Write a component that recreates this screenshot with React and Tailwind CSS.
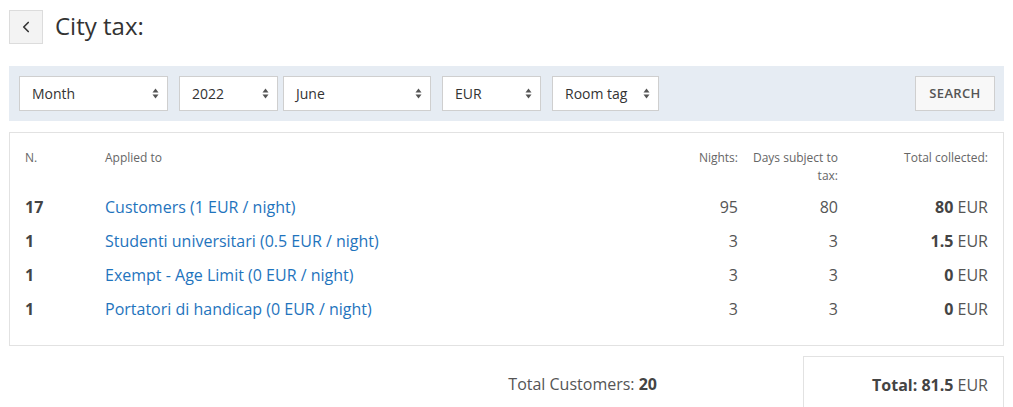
import { ChevronLeft } from "lucide-react";

const rows = [
    { n: 17, label: "Customers (1 EUR / night)", nights: 95, days: 80, total: "80" },
    { n: 1, label: "Studenti universitari (0.5 EUR / night)", nights: 3, days: 3, total: "1.5" },
    { n: 1, label: "Exempt - Age Limit (0 EUR / night)", nights: 3, days: 3, total: "0" },
    { n: 1, label: "Portatori di handicap (0 EUR / night)", nights: 3, days: 3, total: "0" },
];

const SortArrows = () => (
    <svg width="7" height="11" viewBox="0 0 7 11" className="shrink-0">
        <path d="M3.5 0.5 L6.5 4.5 L0.5 4.5 Z" fill="#555" />
        <path d="M3.5 10.5 L6.5 6.5 L0.5 6.5 Z" fill="#555" />
    </svg>
);

const FakeSelect = ({ label, className }) => (
    <div className={`h-[35px] bg-white border border-[#cfcfcf] flex items-center justify-between pl-3 pr-2 text-[14px] text-[#333] ${className}`}>
        <span>{label}</span>
        <SortArrows />
    </div>
);

const App = () => {
    return (
        <div className="w-[1013px] h-[407px] overflow-hidden bg-white text-[#333]" style={{ fontFamily: '"Open Sans", "Liberation Sans", sans-serif' }}>
            {/* heading */}
            <div className="flex items-center pl-[9px] pt-[10px]">
                <button className="w-[34px] h-[34px] bg-[#f3f3f3] border border-[#dcdcdc] flex items-center justify-center text-[#333]">
                    <ChevronLeft size={18} strokeWidth={2.2} />
                </button>
                <h1 className="ml-[12px] text-[24px] leading-none text-[#333] -mt-[2px]">City tax:</h1>
            </div>

            {/* filters */}
            <div className="mx-[9px] mt-[22px] h-[55px] bg-[#e6ecf3] flex items-center pl-[10px] pr-[9px]">
                <FakeSelect label="Month" className="w-[149px]" />
                <FakeSelect label="2022" className="w-[99px] ml-[11px]" />
                <FakeSelect label="June" className="w-[148px] ml-[5px]" />
                <FakeSelect label="EUR" className="w-[99px] ml-[11px]" />
                <FakeSelect label="Room tag" className="w-[107px] ml-[11px]" />
                <button className="ml-auto h-[35px] w-[80px] bg-[#f8f8f8] border border-[#cfcfcf] text-[13px] font-semibold text-[#555] tracking-wide">
                    SEARCH
                </button>
            </div>

            {/* table panel */}
            <div className="mx-[9px] mt-[11px] border border-[#e2e2e2] px-[15px] pt-[16px] pb-[19px]">
                <div className="grid grid-cols-[80px_1fr_100px_100px_150px] text-[12px] leading-[18px] text-[#666]">
                    <div>N.</div>
                    <div>Applied to</div>
                    <div className="text-right">Nights:</div>
                    <div className="text-right pl-[14px]">Days subject to tax:</div>
                    <div className="text-right">Total collected:</div>
                </div>
                <div className="mt-[5px]">
                    {rows.map((r, idx) => (
                        <div key={idx} className="grid grid-cols-[80px_1fr_100px_100px_150px] h-[34px] items-center text-[16px]">
                            <div className="font-bold text-[#444]">{r.n}</div>
                            <div className="text-[#1f74bd]">{r.label}</div>
                            <div className="text-right text-[#555]">{r.nights}</div>
                            <div className="text-right text-[#555]">{r.days}</div>
                            <div className="text-right text-[#555]">
                                <span className="font-bold text-[#444]">{r.total}</span> EUR
                            </div>
                        </div>
                    ))}
                </div>
            </div>

            {/* totals */}
            <div className="flex items-start justify-end mx-[9px] mt-[10px]">
                <div className="mt-[16px] mr-[146px] text-[16px] text-[#555]">
                    Total Customers: <span className="font-bold text-[#444]">20</span>
                </div>
                <div className="w-[201px] h-[60px] border border-[#e2e2e2] flex justify-end pr-[15px] pt-[16px] text-[16px] text-[#555]">
                    <span><span className="font-bold text-[#444]">Total: 81.5</span> EUR</span>
                </div>
            </div>
        </div>
    );
};

export default App;
